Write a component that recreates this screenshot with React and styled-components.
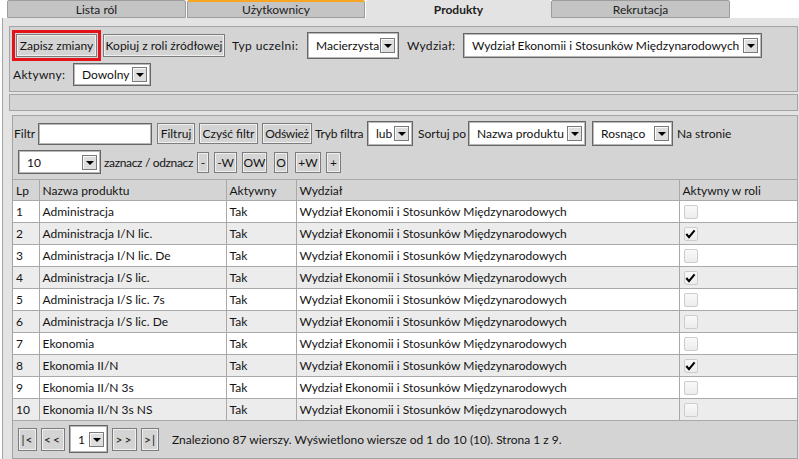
import React from "react";
import styled, { createGlobalStyle } from "styled-components";

const Global = createGlobalStyle`
  html, body { margin: 0; padding: 0; background: #fff; }
  body { font-family: Lato, "Noto Sans", sans-serif; font-size: 12px; color: #141414; }
  * { box-sizing: border-box; }
`;

const Page = styled.div`
  width: 799px;
  height: 459px;
  overflow: hidden;
  background: #fff;
  display: flex;
  flex-direction: column;
`;

const TabBar = styled.div`
  display: flex;
  height: 18px;
  padding-left: 7px;
  flex: none;
`;

const Tab = styled.div`
  width: ${(p) => p.$w}px;
  height: 18px;
  margin-right: ${(p) => (p.$active ? 0 : 1)}px;
  display: flex;
  align-items: center;
  justify-content: center;
  font-weight: ${(p) => (p.$active ? 700 : 400)};
  background: ${(p) => (p.$active ? "#e3e3e3" : "#c4c4c4")};
  border: ${(p) => (p.$active ? "none" : "1px solid #9c9c9c")};
  border-top: ${(p) =>
    p.$hover ? "2px solid #f6a623" : p.$active ? "none" : "1px solid #9c9c9c"};
  border-radius: 2px 2px 0 0;
  color: #202020;
`;

const Body = styled.div`
  flex: 1;
  margin-left: 2px;
  border-left: 1px solid #a4a4a4;
  background: #e3e3e3;
  padding: 8px 1px 0 6px;
  display: flex;
  flex-direction: column;
`;

const Panel = styled.div`
  background: #d4d4d4;
  border: 1px solid #a4a4a4;
  padding: 3px 2px 5px 2px;
  display: flex;
  flex-direction: column;
  gap: 2px;
`;

const Row = styled.div`
  display: flex;
  align-items: center;
  height: ${(p) => p.$h}px;
  padding-left: ${(p) => p.$pl || 0}px;
  margin-top: ${(p) => p.$mt || 0}px;
`;

const Strip = styled.div`
  margin-top: 2px;
  height: 17px;
  background: #d4d4d4;
  border: 1px solid #a4a4a4;
`;

const FilterPanel = styled.div`
  margin: 4px 0 0 3px;
  flex: 1;
  background: #d4d4d4;
  border: 1px solid #a4a4a4;
  border-bottom: none;
  display: flex;
  flex-direction: column;
`;

const RedFrame = styled.div`
  border: 3px solid #e3121b;
  padding: 1px;
  display: flex;
`;

const Button = styled.div`
  width: ${(p) => p.$w}px;
  height: ${(p) => p.$h || 23}px;
  margin-left: ${(p) => p.$ml || 0}px;
  flex: none;
  display: flex;
  align-items: center;
  justify-content: center;
  background: #d4d4d4;
  border: 1px solid #7c7c7c;
  box-shadow: inset 0 0 0 1px #efefef;
  white-space: nowrap;
  letter-spacing: ${(p) => p.$ls || 0}px;
  color: #141414;
  overflow: hidden;
`;

const Label = styled.div`
  width: ${(p) => p.$w}px;
  margin-left: ${(p) => p.$ml || 0}px;
  flex: none;
  white-space: nowrap;
  letter-spacing: ${(p) => p.$ls || 0}px;
`;

const SelectBox = styled.div`
  width: ${(p) => p.$w}px;
  height: ${(p) => p.$h}px;
  margin-left: ${(p) => p.$ml || 0}px;
  flex: none;
  display: flex;
  align-items: center;
  justify-content: space-between;
  background: #fff;
  border: 1px solid #666;
  box-shadow: inset 0 0 0 1px #b8b8b8;
  padding: 0 3px 0 8px;
  white-space: nowrap;
  color: #111;
`;

const DropBtn = styled.div`
  width: 15px;
  height: 15px;
  flex: none;
  display: flex;
  align-items: center;
  justify-content: center;
  background: #dedede;
  border: 1px solid #7a7a7a;
  box-shadow: inset 1px 1px 0 #fafafa;
`;

const Arrow = styled.div`
  width: 0;
  height: 0;
  border-left: 4px solid transparent;
  border-right: 4px solid transparent;
  border-top: 4px solid #000;
  margin-top: 1px;
`;

const TextInput = styled.div`
  width: ${(p) => p.$w}px;
  height: 22px;
  flex: none;
  background: #fff;
  border: 1px solid #666;
  box-shadow: inset 0 0 0 1px #b8b8b8;
`;

const Select = ({ w, h, ml, children }) => (
  <SelectBox $w={w} $h={h} $ml={ml}>
    <span>{children}</span>
    <DropBtn>
      <Arrow />
    </DropBtn>
  </SelectBox>
);

const Table = styled.table`
  margin-top: 5px;
  width: 784px;
  border-collapse: collapse;
  table-layout: fixed;
`;

const Th = styled.th`
  height: 21px;
  font-weight: 400;
  text-align: left;
  padding: 0 3px;
  background: #d4d4d4;
  border: 1px solid #a9a9a9;
  &:first-child { border-left: none; }
  &:last-child { border-right: none; }
  white-space: nowrap;
`;

const Tr = styled.tr`
  background: ${(p) => (p.$alt ? "#ececec" : "#fff")};
`;

const Td = styled.td`
  height: 22px;
  padding: 0 3px;
  border: 1px solid #a9a9a9;
  &:first-child { border-left: none; }
  &:last-child { border-right: none; }
  white-space: nowrap;
  overflow: hidden;
`;

const Check = styled.div`
  width: 14px;
  height: 14px;
  margin-left: 1px;
  border: 1px solid #cdcdcd;
  border-radius: 2px;
  background: linear-gradient(#f9f9f9, #ececec);
  display: flex;
  align-items: center;
  justify-content: center;
`;

const Pager = styled.div`
  flex: 1;
  display: flex;
  align-items: center;
  padding-left: 5px;
  padding-bottom: 1px;
  border-bottom: 1px solid #a4a4a4;
`;

const PagerText = styled.div`
  margin-left: 13px;
  white-space: nowrap;
`;

const rows = [
  ["Administracja", false],
  ["Administracja I/N lic.", true],
  ["Administracja I/N lic. De", false],
  ["Administracja I/S lic.", true],
  ["Administracja I/S lic. 7s", false],
  ["Administracja I/S lic. De", false],
  ["Ekonomia", false],
  ["Ekonomia II/N", true],
  ["Ekonomia II/N 3s", false],
  ["Ekonomia II/N 3s NS", false],
];

const WYDZIAL = "Wydział Ekonomii i Stosunków Międzynarodowych";

export default function App() {
  return (
    <Page>
      <Global />
      <TabBar>
        <Tab $w={179}>Lista ról</Tab>
        <Tab $w={178} $hover>Użytkownicy</Tab>
        <Tab $w={185} $active>Produkty</Tab>
        <Tab $w={179}>Rekrutacja</Tab>
      </TabBar>
      <Body>
        <Panel>
          <Row $h={31}>
            <RedFrame>
              <Button $w={81} $h={23}>Zapisz zmiany</Button>
            </RedFrame>
            <Button $w={122} $ml={2}>Kopiuj z roli źródłowej</Button>
            <Label $w={75} $ml={7} $ls={0.4}>Typ uczelni:</Label>
            <Select w={92} h={27}>Macierzysta</Select>
            <Label $w={56} $ml={8} $ls={0.3}>Wydział:</Label>
            <Select w={299} h={25}>{WYDZIAL}</Select>
          </Row>
          <Row $h={23} $pl={1}>
            <Label $w={60} $ls={0.3}>Aktywny:</Label>
            <Select w={78} h={23}>Dowolny</Select>
          </Row>
        </Panel>
        <Strip />
        <FilterPanel>
          <Row $h={25} $pl={1} $mt={5}>
            <Label $w={24}>Filtr</Label>
            <TextInput $w={114} />
            <Button $w={38} $h={21} $ml={5}>Filtruj</Button>
            <Button $w={59} $h={21} $ml={4}>Czyść filtr</Button>
            <Button $w={50} $h={21} $ml={4} $ls={-0.3}>Odśwież</Button>
            <Label $w={52} $ml={3} $ls={-0.2}>Tryb filtra</Label>
            <Select w={46} h={25}>lub</Select>
            <Label $w={50} $ml={5}>Sortuj po</Label>
            <Select w={118} h={25}>Nazwa produktu</Select>
            <Select w={81} h={25} ml={6}>Rosnąco</Select>
            <Label $w={60} $ml={4}>Na stronie</Label>
          </Row>
          <Row $h={24} $pl={5} $mt={4}>
            <Select w={83} h={24}>10</Select>
            <Label $w={93} $ml={3} $ls={-0.35}>zaznacz / odznacz</Label>
            <Button $w={12} $h={21}>-</Button>
            <Button $w={23} $h={21} $ml={5}>-W</Button>
            <Button $w={25} $h={21} $ml={5}>OW</Button>
            <Button $w={14} $h={21} $ml={7}>O</Button>
            <Button $w={26} $h={21} $ml={7}>+W</Button>
            <Button $w={15} $h={21} $ml={5}>+</Button>
          </Row>
          <Table>
            <colgroup>
              <col style={{ width: 26 }} />
              <col style={{ width: 187 }} />
              <col style={{ width: 70 }} />
              <col style={{ width: 383 }} />
              <col style={{ width: 118 }} />
            </colgroup>
            <thead>
              <tr>
                <Th>Lp</Th>
                <Th>Nazwa produktu</Th>
                <Th>Aktywny</Th>
                <Th>Wydział</Th>
                <Th>Aktywny w roli</Th>
              </tr>
            </thead>
            <tbody>
              {rows.map(([name, on], i) => (
                <Tr key={i} $alt={i % 2 === 1}>
                  <Td>{i + 1}</Td>
                  <Td>{name}</Td>
                  <Td>Tak</Td>
                  <Td>{WYDZIAL}</Td>
                  <Td>
                    <Check>
                      {on && (
                        <svg width="11" height="10" viewBox="0 0 11 10">
                          <path d="M1.3 5 L4 8.2 L9.6 1.3" fill="none" stroke="#000" strokeWidth="2" />
                        </svg>
                      )}
                    </Check>
                  </Td>
                </Tr>
              ))}
            </tbody>
          </Table>
          <Pager>
            <Button $w={19} $h={23} $ls={1}>|&lt;</Button>
            <Button $w={24} $h={23} $ml={4} $ls={2}>&lt;&lt;</Button>
            <Select w={39} h={28} ml={4}>1</Select>
            <Button $w={25} $h={23} $ml={4} $ls={2}>&gt;&gt;</Button>
            <Button $w={18} $h={23} $ml={4} $ls={1}>&gt;|</Button>
            <PagerText>
              Znaleziono 87 wierszy. Wyświetlono wiersze od 1 do 10 (10). Strona 1 z 9.
            </PagerText>
          </Pager>
        </FilterPanel>
      </Body>
    </Page>
  );
}
